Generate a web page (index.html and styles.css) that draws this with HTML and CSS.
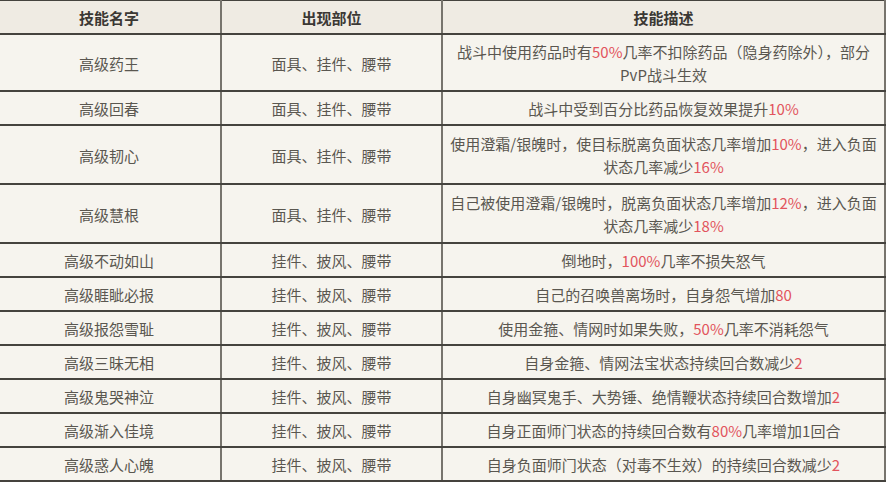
FILE: index.html
```html
<!DOCTYPE html>
<html lang="zh">
<head>
<meta charset="utf-8">
<title>技能表</title>
<link rel="stylesheet" href="styles.css">
</head>
<body>
<table class="skills">
  <colgroup>
    <col class="c-name">
    <col class="c-slot">
    <col class="c-desc">
  </colgroup>
  <thead>
    <tr><th>技能名字</th><th>出现部位</th><th>技能描述</th></tr>
  </thead>
  <tbody>
    <tr><td>高级药王</td><td>面具、挂件、腰带</td><td>战斗中使用药品时有<span class="hl">50%</span>几率不扣除药品（隐身药除外），部分<br>PvP战斗生效</td></tr>
    <tr><td>高级回春</td><td>面具、挂件、腰带</td><td>战斗中受到百分比药品恢复效果提升<span class="hl">10%</span></td></tr>
    <tr class="tall"><td>高级韧心</td><td>面具、挂件、腰带</td><td>使用澄霜/银魄时，使目标脱离负面状态几率增加<span class="hl">10%</span>，进入负面<br>状态几率减少<span class="hl">16%</span></td></tr>
    <tr class="tall"><td>高级慧根</td><td>面具、挂件、腰带</td><td>自己被使用澄霜/银魄时，脱离负面状态几率增加<span class="hl">12%</span>，进入负面<br>状态几率减少<span class="hl">18%</span></td></tr>
    <tr><td>高级不动如山</td><td>挂件、披风、腰带</td><td>倒地时，<span class="hl">100%</span>几率不损失怒气</td></tr>
    <tr><td>高级睚眦必报</td><td>挂件、披风、腰带</td><td>自己的召唤兽离场时，自身怨气增加<span class="hl">80</span></td></tr>
    <tr><td>高级报怨雪耻</td><td>挂件、披风、腰带</td><td>使用金箍、情网时如果失败，<span class="hl">50%</span>几率不消耗怨气</td></tr>
    <tr><td>高级三昧无相</td><td>挂件、披风、腰带</td><td>自身金箍、情网法宝状态持续回合数减少<span class="hl">2</span></td></tr>
    <tr><td>高级鬼哭神泣</td><td>挂件、披风、腰带</td><td>自身幽冥鬼手、大势锤、绝情鞭状态持续回合数增加<span class="hl">2</span></td></tr>
    <tr><td>高级渐入佳境</td><td>挂件、披风、腰带</td><td>自身正面师门状态的持续回合数有<span class="hl">80%</span>几率增加1回合</td></tr>
    <tr><td>高级惑人心魄</td><td>挂件、披风、腰带</td><td>自身负面师门状态（对毒不生效）的持续回合数减少<span class="hl">2</span></td></tr>
  </tbody>
</table>
</body>
</html>
```

FILE: styles.css
```css
html, body {
  margin: 0;
  padding: 0;
  background: #f6f4ee;
  overflow: hidden;
}

.skills {
  margin-left: -4px;
  width: 888px;
  table-layout: fixed;
  border-collapse: collapse;
  font-family: "Noto Sans CJK SC", "Noto Sans", sans-serif;
  font-size: 15px;
  line-height: 23px;
  color: #5a5750;
  text-align: center;
}

.c-name { width: 224px; }
.c-slot { width: 221px; }
.c-desc { width: 443px; }

.skills th,
.skills td {
  padding: 5px 2px 4px;
  border-top: 2px solid #45433e;
  border-bottom: 2px solid #45433e;
  border-left: 2px solid #77746d;
  border-right: 2px solid #77746d;
  white-space: nowrap;
}

.skills thead th {
  background: #efebe3;
  color: #3b3834;
  font-weight: 700;
  border-top: 1px solid #45433e;
}

.skills tr.tall td {
  padding-top: 6px;
  padding-bottom: 5px;
}

.hl {
  color: #e2545d;
}
```
